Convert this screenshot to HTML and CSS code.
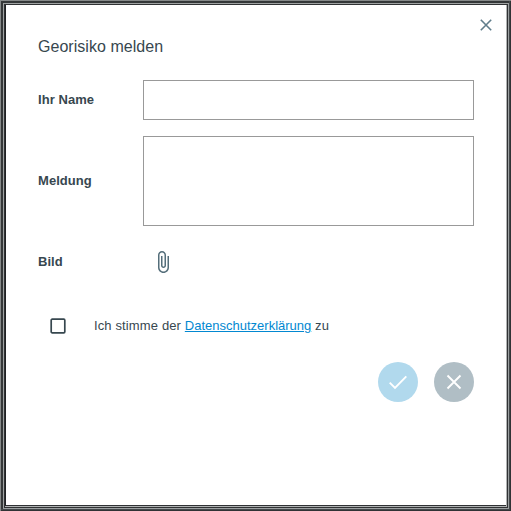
FILE: index.html
```html
<!DOCTYPE html>
<html lang="de">
<head>
<meta charset="utf-8">
<title>Georisiko melden</title>
<link rel="stylesheet" href="styles.css">
</head>
<body>
<main class="dialog">
  <button class="close" aria-label="Schliessen">
    <svg width="12" height="12" viewBox="0 0 12 12"><path d="M.8.800 11.200 11.200M11.200.800.800 11.200"/></svg>
  </button>
  <h1>Georisiko melden</h1>
  <form>
    <div class="row name-row">
      <label for="name">Ihr Name</label>
      <input id="name" class="field" type="text">
    </div>
    <div class="row message-row">
      <label for="message">Meldung</label>
      <textarea id="message" class="field"></textarea>
    </div>
    <div class="row image-row">
      <span class="label">Bild</span>
      <svg class="clip" width="24" height="24" viewBox="0 0 24 24"><path d="M16.5 6v11.5c0 2.21-1.79 4-4 4s-4-1.79-4-4V5c0-1.38 1.12-2.5 2.5-2.5s2.5 1.12 2.5 2.5v10.5c0 .55-.45 1-1 1s-1-.45-1-1V6H10v9.500c0 1.380 1.120 2.500 2.500 2.500s2.500-1.120 2.500-2.500V5c0-2.210-1.790-4-4-4S7 2.790 7 5v12.500c0 3.040 2.460 5.500 5.500 5.500s5.500-2.460 5.500-5.500V6h-1.500z"/></svg>
    </div>
    <div class="consent">
      <svg class="checkbox" width="16" height="16" viewBox="0 0 16 16" role="checkbox" aria-checked="false"><rect x="1.200" y="1.200" width="13.600" height="13.600" rx="1"/></svg>
      <p>Ich stimme der <a href="#">Datenschutzerklärung</a> zu</p>
    </div>
    <div class="actions">
      <button type="button" class="round submit" aria-label="Senden"><svg width="20" height="20" viewBox="0 0 20 20"><path d="M1.700 10.700 7 16 18.300 4.400"/></svg></button>
      <button type="button" class="round cancel" aria-label="Abbrechen"><svg width="20" height="20" viewBox="0 0 20 20"><path d="M3.500 3.500 16.500 16.500M16.500 3.500 3.500 16.500"/></svg></button>
    </div>
  </form>
</main>
</body>
</html>
```
FILE: styles.css
```css
* { box-sizing: border-box; }
body {
  margin: 0;
  height: 511px;
  overflow: hidden;
  font: 13px/20px "Liberation Sans", Arial, sans-serif;
  letter-spacing: .06px;
  color: #37474f;
}
.dialog {
  position: relative;
  height: 511px;
  padding: 37px 37px 0 38px;
  background: #fff;
  /* bevelled frame: light top-left edge, dark bottom-right edge */
  box-shadow:
    inset 1px 1px #868989,
    inset -1px -1px #303335,
    inset -2px -2px #45494b,
    inset 0 0 0 2px #343738,
    inset 3px 3px #343738,
    inset -3px -3px #9b9fa0,
    inset 4px 4px #a0a3a3,
    inset -4px -4px #303234,
    inset 5px 5px #303234,
    inset -5px -5px #b0b3b3,
    inset 6px 0 #202224,
    inset 0 -6px #303234;
}
h1 {
  margin: 0 0 23px;
  font-size: 16px;
  font-weight: 400;
  line-height: 20px;
  letter-spacing: .04px;
}
button {
  padding: 0;
  border: 0;
  background: none;
}
.close {
  position: absolute;
  top: 19px;
  right: 19px;
  width: 12px;
  height: 12px;
}
svg { display: block; }
.close path {
  stroke: #607d8b;
  stroke-width: 1.6;
}
.row {
  display: grid;
  grid-template-columns: 105px 1fr;
  align-items: center;
}
label, .label { font-weight: 700; }
.field {
  display: block;
  width: 331px;
  margin: 0;
  padding: 8px;
  border: 1px solid #999;
  border-radius: 0;
  background: #fff;
  font: inherit;
  resize: none;
  outline: 0;
}
input.field { height: 40px; }
textarea.field { height: 90px; }
.message-row { margin-top: 16px; }
.image-row { height: 40px; margin-top: 16px; }
.clip {
  margin-left: 8px;
  fill: #546e7a;
}
.consent {
  display: flex;
  align-items: center;
  height: 40px;
  margin-top: 24px;
}
.checkbox {
  margin: 0 28px 0 12px;
  fill: none;
  stroke: #37474f;
  stroke-width: 1.7;
}
p {
  margin: 0;
  letter-spacing: .13px;
}
a {
  color: #0288d1;
  letter-spacing: 0;
}
.actions {
  display: flex;
  justify-content: flex-end;
  gap: 16px;
  margin-top: 16px;
}
.round {
  display: grid;
  place-items: center;
  width: 40px;
  height: 40px;
  border-radius: 50%;
}
.round path {
  fill: none;
  stroke: #fff;
  stroke-width: 1.9;
}
.submit { background: #b1d9ed; }
.cancel { background: #b0bec5; }
```
